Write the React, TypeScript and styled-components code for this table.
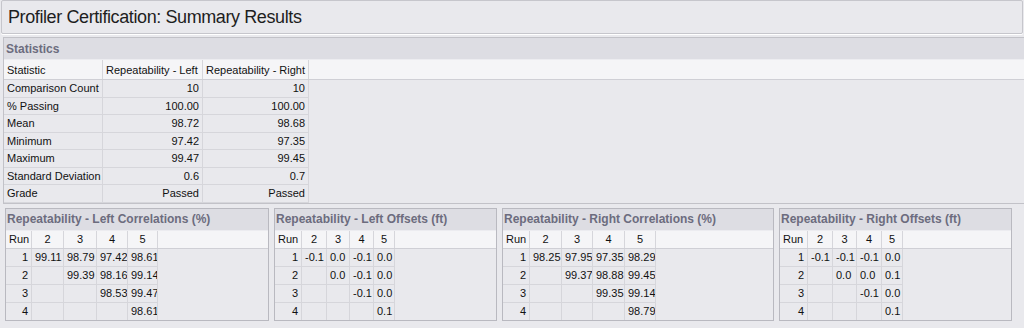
import React from "react";
import styled, { createGlobalStyle } from "styled-components";

const GlobalStyle = createGlobalStyle`
  html, body {
    margin: 0;
    padding: 0;
    background: #e9e9ed;
  }
  body {
    font-family: "Liberation Sans", Arial, sans-serif;
    color: #111111;
  }
`;

interface IPanel {
  title: string;
  width: number;
  cols: number[];
  rows: string[][];
}

const statRows: [string, string, string][] = [
  ["Comparison Count", "10", "10"],
  ["% Passing", "100.00", "100.00"],
  ["Mean", "98.72", "98.68"],
  ["Minimum", "97.42", "97.35"],
  ["Maximum", "99.47", "99.45"],
  ["Standard Deviation", "0.6", "0.7"],
  ["Grade", "Passed", "Passed"],
];

const panels: IPanel[] = [
  {
    title: "Repeatability - Left Correlations (%)",
    width: 264,
    cols: [26, 32, 33, 31, 30],
    rows: [
      ["99.11", "98.79", "97.42", "98.61"],
      ["", "99.39", "98.16", "99.14"],
      ["", "", "98.53", "99.47"],
      ["", "", "", "98.61"],
    ],
  },
  {
    title: "Repeatability - Left Offsets (ft)",
    width: 223,
    cols: [27, 25, 23, 24, 21],
    rows: [
      ["-0.1", "0.0", "-0.1", "0.0"],
      ["", "0.0", "-0.1", "0.0"],
      ["", "", "-0.1", "0.0"],
      ["", "", "", "0.1"],
    ],
  },
  {
    title: "Repeatability - Right Correlations (%)",
    width: 272,
    cols: [27, 32, 31, 32, 31],
    rows: [
      ["98.25", "97.95", "97.35", "98.29"],
      ["", "99.37", "98.88", "99.45"],
      ["", "", "99.35", "99.14"],
      ["", "", "", "98.79"],
    ],
  },
  {
    title: "Repeatability - Right Offsets (ft)",
    width: 233,
    cols: [28, 25, 24, 25, 21],
    rows: [
      ["-0.1", "-0.1", "-0.1", "0.0"],
      ["", "0.0", "0.0", "0.1"],
      ["", "", "-0.1", "0.0"],
      ["", "", "", "0.1"],
    ],
  },
];

const statCols = "99px 100px 106px 1fr";

const App: React.FC = () => {
  return (
    <Page>
      <GlobalStyle />
      <TitleBar>Profiler Certification: Summary Results</TitleBar>

      <StatsSection>
        <GroupHeader>Statistics</GroupHeader>
        <HeadRow $cols={statCols}>
          <HeadCell>Statistic</HeadCell>
          <HeadCell>Repeatability - Left</HeadCell>
          <HeadCell>Repeatability - Right</HeadCell>
          <Filler />
        </HeadRow>
        {statRows.map(([name, left, right]) => (
          <BodyRow key={name} $cols={statCols} $h={17.5}>
            <Cell>{name}</Cell>
            <Cell $align="right">{left}</Cell>
            <Cell $align="right">{right}</Cell>
            <Filler />
          </BodyRow>
        ))}
      </StatsSection>

      <PanelRow>
        {panels.map((p) => {
          const cols = p.cols.map((c) => `${c}px`).join(" ") + " 1fr";
          return (
            <Panel key={p.title} $width={p.width}>
              <PanelHeader>{p.title}</PanelHeader>
              <HeadRow $cols={cols} $h={19}>
                <HeadCell>Run</HeadCell>
                {[2, 3, 4, 5].map((n) => (
                  <HeadCell key={n} $align="center">
                    {n}
                  </HeadCell>
                ))}
                <Filler />
              </HeadRow>
              {p.rows.map((r, i) => (
                <BodyRow key={i} $cols={cols} $h={18}>
                  <Cell $align="right">{i + 1}</Cell>
                  {r.map((v, j) => (
                    <Cell key={j}>{v}</Cell>
                  ))}
                  <Filler />
                </BodyRow>
              ))}
            </Panel>
          );
        })}
      </PanelRow>
    </Page>
  );
};

export default App;

const Page = styled.div`
  width: 1024px;
  height: 328px;
  overflow: hidden;
  background: #e9e9ed;
`;

const TitleBar = styled.div`
  height: 34px;
  box-sizing: border-box;
  margin: 0 1px;
  padding: 0 6px;
  border: 1px solid #c6c6cc;
  border-radius: 2px;
  box-shadow: 0 1px 0 #ffffff;
  display: flex;
  align-items: center;
  font-size: 18px;
  letter-spacing: -0.4px;
  color: #1e1e1e;
`;

const StatsSection = styled.div`
  margin: 3px 0 0 3px;
  border: 1px solid #c2c2c8;
  border-right: none;
`;

const GroupHeader = styled.div`
  height: 21px;
  padding: 0 2px;
  display: flex;
  align-items: center;
  background: #dddde3;
  font-size: 12px;
  font-weight: bold;
  color: #6c6c7e;
`;

const HeadRow = styled.div<{ $cols: string; $h?: number }>`
  display: grid;
  grid-template-columns: ${(p) => p.$cols};
  height: ${(p) => p.$h ?? 21}px;
  box-sizing: border-box;
  background: #f5f5f7;
  border-top: 1px solid #ececf0;
  border-bottom: 1px solid #cfcfd5;
  font-size: 11px;
`;

const BodyRow = styled.div<{ $cols: string; $h: number }>`
  display: grid;
  grid-template-columns: ${(p) => p.$cols};
  height: ${(p) => p.$h}px;
  font-size: 11px;
`;

const HeadCell = styled.div<{ $align?: "left" | "center" | "right" }>`
  display: flex;
  align-items: center;
  justify-content: ${(p) =>
    p.$align === "center" ? "center" : p.$align === "right" ? "flex-end" : "flex-start"};
  padding: 0 3px;
  border-right: 1px solid #d6d6db;
  white-space: nowrap;
  overflow: hidden;
`;

const Cell = styled.div<{ $align?: "left" | "right" }>`
  display: flex;
  align-items: center;
  justify-content: ${(p) => (p.$align === "right" ? "flex-end" : "flex-start")};
  padding: 0 3px;
  border-right: 1px solid #d6d6db;
  border-bottom: 1px solid #d6d6db;
  white-space: nowrap;
  overflow: hidden;
`;

const Filler = styled.div``;

const PanelRow = styled.div`
  display: flex;
  gap: 5px;
  margin-top: 4px;
  padding-left: 5px;
`;

const Panel = styled.div<{ $width: number }>`
  width: ${(p) => p.$width}px;
  height: 113px;
  box-sizing: border-box;
  border: 1px solid #b9b9c0;
  overflow: hidden;
`;

const PanelHeader = styled.div`
  height: 21px;
  padding: 0 1px;
  display: flex;
  align-items: center;
  background: #dddde3;
  font-size: 12px;
  font-weight: bold;
  color: #6c6c7e;
  white-space: nowrap;
`;
